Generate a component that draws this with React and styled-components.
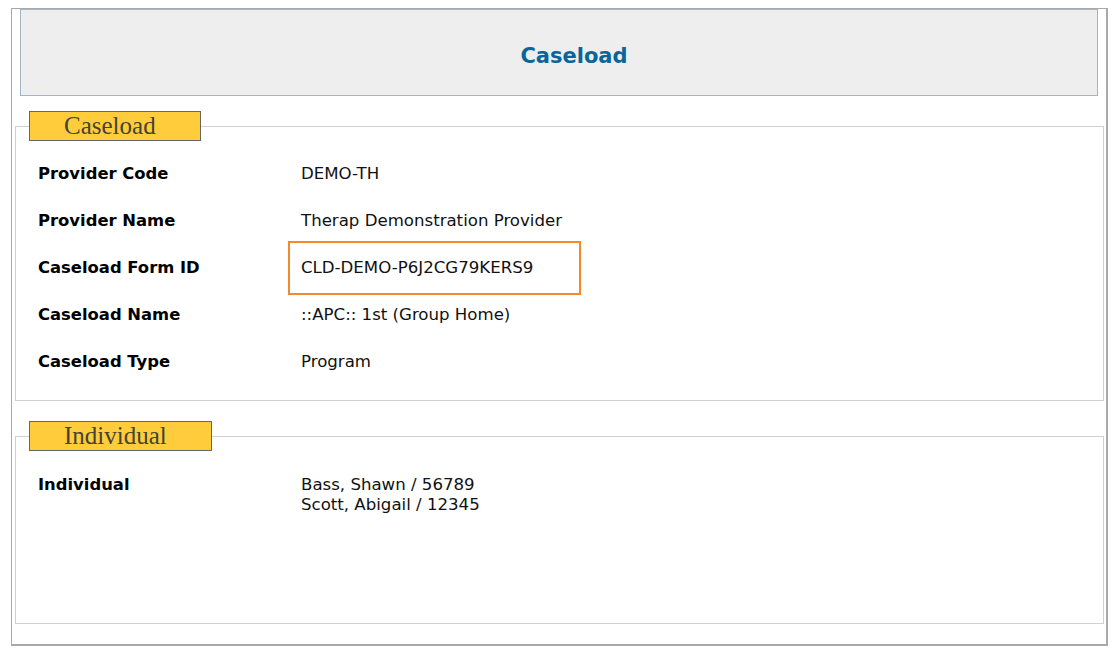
import styled, { createGlobalStyle } from "styled-components";

const GlobalStyle = createGlobalStyle`
  body {
    margin: 0;
    background: #ffffff;
    font-family: "DejaVu Sans", Verdana, sans-serif;
  }
`;

const caseloadRows = [
  { label: "Provider Code", value: "DEMO-TH" },
  { label: "Provider Name", value: "Therap Demonstration Provider" },
  { label: "Caseload Form ID", value: "CLD-DEMO-P6J2CG79KERS9", marked: true },
  { label: "Caseload Name", value: "::APC:: 1st (Group Home)" },
  { label: "Caseload Type", value: "Program" },
];

const individuals = ["Bass, Shawn / 56789", "Scott, Abigail / 12345"];

export default function App() {
  return (
    <>
      <GlobalStyle />
      <Frame>
        <Header>
          <Title>Caseload</Title>
        </Header>

        <Section>
          <Legend>Caseload</Legend>
          <Rows>
            {caseloadRows.map((row) => (
              <Row key={row.label}>
                <Label>{row.label}</Label>
                <Value $marked={row.marked}>{row.value}</Value>
              </Row>
            ))}
          </Rows>
        </Section>

        <Section>
          <Legend>Individual</Legend>
          <IndividualBody>
            <Label>Individual</Label>
            <ValueList>
              {individuals.map((name) => (
                <span key={name}>{name}</span>
              ))}
            </ValueList>
          </IndividualBody>
        </Section>
      </Frame>
    </>
  );
}

const Frame = styled.div`
  margin: 8px 0 0 11px;
  width: 1097px;
  box-sizing: border-box;
  border: 1px solid #a9a9a9;
  border-right-width: 2px;
  border-bottom-width: 2px;
  padding-bottom: 20px;
  display: flex;
  flex-direction: column;
`;

const Header = styled.div`
  margin: 0 8px 0 8px;
  height: 87px;
  box-sizing: border-box;
  background: #eeeeee;
  border: 1px solid #a3b6c6;
  display: flex;
  align-items: center;
  justify-content: center;
  padding: 7px 0 0 30px;
`;

const Title = styled.h1`
  margin: 0;
  font-size: 21px;
  font-weight: bold;
  color: #0a6698;
`;

const Section = styled.fieldset`
  margin: 15px 2px 0 3px;
  padding: 0 13px;
  border: 1px solid #d0d0d0;
  min-width: 0;

  & + & {
    margin-top: 20px;
  }
`;

const Legend = styled.legend`
  box-sizing: border-box;
  height: 30px;
  line-height: 27px;
  padding: 0 44px 0 34px;
  background: #ffcd3c;
  border: 1px solid #666666;
  font-family: "Liberation Serif", "Times New Roman", serif;
  font-size: 25px;
  color: #444433;
`;

const Rows = styled.div`
  padding: 9px 0 15px 9px;
`;

const Row = styled.div`
  display: grid;
  grid-template-columns: 263px 1fr;
  height: 47px;
  align-items: center;
`;

const Label = styled.span`
  font-size: 16.4px;
  font-weight: bold;
  color: #000000;
`;

const Value = styled.span`
  position: relative;
  font-size: 16.6px;
  color: #111111;

  ${({ $marked }) =>
    $marked &&
    `
    &::before {
      content: "";
      position: absolute;
      left: -13px;
      top: -17px;
      width: 293px;
      height: 54px;
      box-sizing: border-box;
      border: 2px solid #f28a2c;
    }
  `}
`;

const IndividualBody = styled.div`
  height: 172px;
  box-sizing: border-box;
  padding: 24px 0 0 9px;
  display: grid;
  grid-template-columns: 263px 1fr;
  align-items: start;
  line-height: 20px;
`;

const ValueList = styled.div`
  display: flex;
  flex-direction: column;
  font-size: 16.6px;
  color: #111111;
`;
